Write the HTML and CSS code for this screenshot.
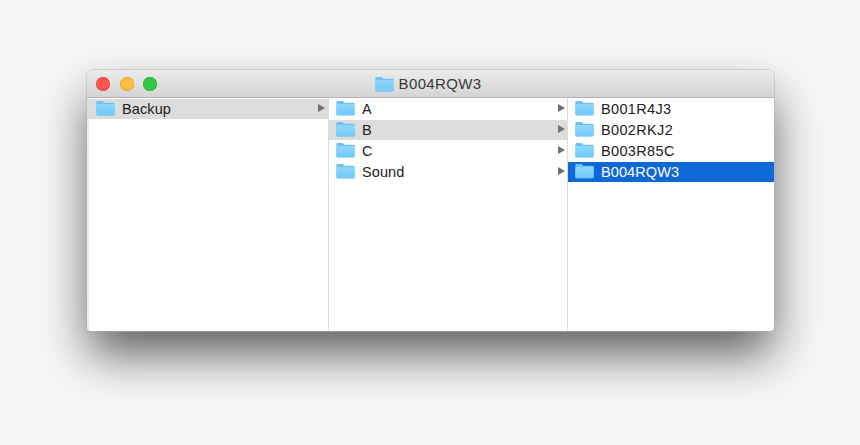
FILE: index.html
```
<!DOCTYPE html>
<html lang="en">
<head>
<meta charset="utf-8">
<title>B004RQW3</title>
<link rel="stylesheet" href="styles.css">
</head>
<body>
<svg class="defs" width="0" height="0" aria-hidden="true">
  <defs>
    <linearGradient id="fg" x1="0" y1="0" x2="0" y2="1">
      <stop offset="0" stop-color="#8ed8fc"/>
      <stop offset="1" stop-color="#72c9f9"/>
    </linearGradient>
    <symbol id="folder" viewBox="0 0 19 16">
      <path d="M.4 14V2.2C.4 1.5 .9 1 1.6 1H6.2C6.8 1 7.1 1.2 7.5 1.7L8.4 2.8H17.6C18.2 2.8 18.6 3.2 18.6 3.8V14C18.6 14.6 18.2 15 17.6 15H1.4C.8 15 .4 14.6 .4 14Z" fill="#6cc3f3"/>
      <path d="M.4 14V5C.4 4.4 .8 4 1.4 4H17.6C18.2 4 18.6 4.4 18.6 5V14C18.6 14.6 18.2 15 17.6 15H1.4C.8 15 .4 14.6 .4 14Z" fill="url(#fg)"/>
      <path d="M1.4 15H17.6C18.2 15 18.6 14.6 18.6 14V14.3C18.6 15 18.2 15.5 17.6 15.5H1.4C.8 15.5 .4 15 .4 14.3V14C.4 14.6 .8 15 1.4 15Z" fill="#5cb2e4"/>
    </symbol>
  </defs>
</svg>
<main class="window">
  <header class="titlebar">
    <div class="lights">
      <span class="light red"></span>
      <span class="light yellow"></span>
      <span class="light green"></span>
    </div>
    <div class="title">
      <svg class="folder"><use href="#folder"/></svg>
      <span>B004RQW3</span>
    </div>
  </header>
  <div class="columns">
    <section class="column first">
      <div class="row active"><svg class="folder"><use href="#folder"/></svg><span class="name">Backup</span><span class="arrow"></span></div>
    </section>
    <section class="column">
      <div class="row"><svg class="folder"><use href="#folder"/></svg><span class="name">A</span><span class="arrow"></span></div>
      <div class="row active"><svg class="folder"><use href="#folder"/></svg><span class="name">B</span><span class="arrow"></span></div>
      <div class="row"><svg class="folder"><use href="#folder"/></svg><span class="name">C</span><span class="arrow"></span></div>
      <div class="row"><svg class="folder"><use href="#folder"/></svg><span class="name">Sound</span><span class="arrow"></span></div>
    </section>
    <section class="column last">
      <div class="row"><svg class="folder"><use href="#folder"/></svg><span class="name wide">B001R4J3</span></div>
      <div class="row"><svg class="folder"><use href="#folder"/></svg><span class="name wide">B002RKJ2</span></div>
      <div class="row"><svg class="folder"><use href="#folder"/></svg><span class="name wide">B003R85C</span></div>
      <div class="row selected"><svg class="folder"><use href="#folder"/></svg><span class="name">B004RQW3</span></div>
    </section>
  </div>
</main>
</body>
</html>
```
FILE: styles.css
```
* { box-sizing: border-box; }
html, body { margin: 0; height: 100%; }
body {
  background: #f6f6f6;
  padding: 70px 0 0 87px;
  overflow: hidden;
  font-family: "Liberation Sans", Arial, sans-serif;
}
.defs { display: block; height: 0; }
.window {
  width: 687px;
  height: 261px;
  border-radius: 6px 6px 4px 4px;
  background: #fff;
  display: flex;
  flex-direction: column;
  overflow: hidden;
  box-shadow: 0 0 0 0.5px #b9b9b9, 0 0 1px rgba(0,0,0,.35), 0 25px 48px -2px rgba(0,0,0,.62);
}
.titlebar {
  height: 28px;
  flex: none;
  display: flex;
  align-items: center;
  justify-content: center;
  background: linear-gradient(#ebebeb, #d5d4d5);
  border-bottom: 1px solid #b4b3b4;
  padding-right: 5px;
}
.lights {
  position: absolute;
  left: 96px;
  top: 77px;
  display: flex;
  gap: 9.5px;
}
.light {
  width: 14px;
  height: 14px;
  border-radius: 50%;
}
.red { background: #fc5753; box-shadow: inset 0 0 0 .5px #e0443e; }
.yellow { background: #fdbc40; box-shadow: inset 0 0 0 .5px #dea034; }
.green { background: #33c748; box-shadow: inset 0 0 0 .5px #27aa35; }
.title {
  display: flex;
  align-items: center;
  gap: 5px;
  font-size: 15px;
  letter-spacing: 0.35px;
  color: #3a3a3a;
}
.title .folder { width: 19px; height: 16px; }
.columns {
  flex: 1;
  display: flex;
  min-height: 0;
}
.column {
  flex: none;
  width: 239px;
  padding-top: 1px;
  border-right: 1px solid #dcdcdc;
}
.column.first {
  width: 242px;
  border-left: 2px solid #ececec;
}
.column.last {
  flex: 1;
  border-right: 0;
}
.row {
  height: 20px;
  margin-bottom: 1px;
  display: flex;
  align-items: center;
  padding: 0 2px 0 7px;
  font-size: 14.5px;
  letter-spacing: 0.1px;
  color: #222;
}
.column.first .row { margin-left: -2px; padding-left: 9px; padding-right: 3px; }
.row .folder { width: 19px; height: 16px; flex: none; margin: 0 7px 2px 0; }
.name { flex: 1; white-space: nowrap; }
.wide { letter-spacing: 0.35px; }
.arrow {
  width: 0;
  height: 0;
  margin-bottom: 1.5px;
  border-left: 7.5px solid #707070;
  border-top: 4.5px solid transparent;
  border-bottom: 4.5px solid transparent;
}
.active { background: #dcdcdc; }
.selected { background: #0f68d8; color: #fff; }
```
